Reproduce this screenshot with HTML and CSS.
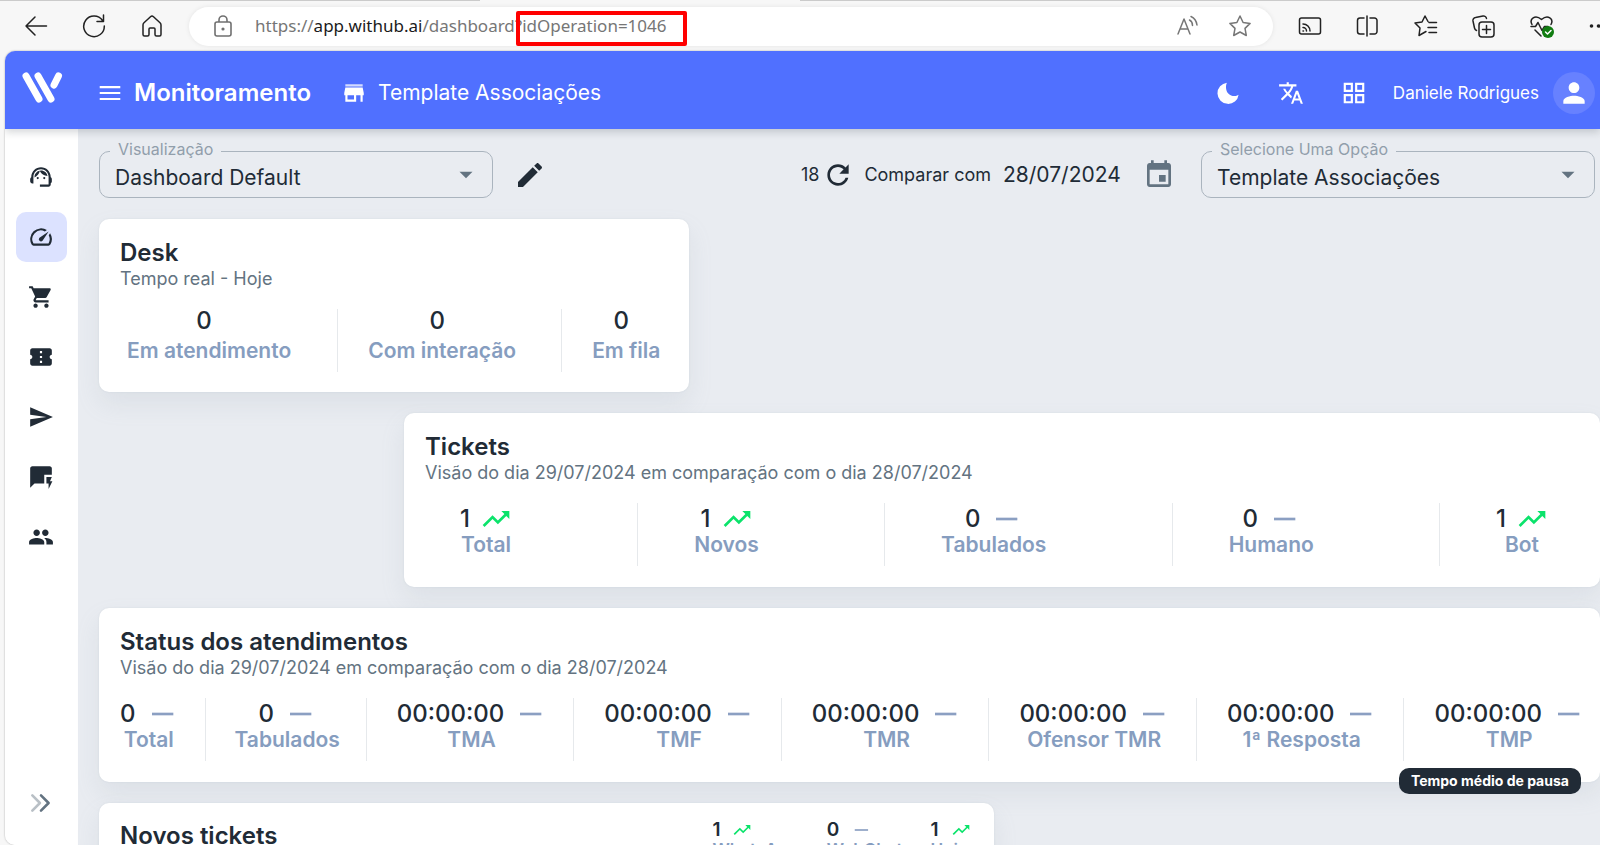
FILE: index.html
```html
<!DOCTYPE html>
<html lang="pt-BR">
<head>
<meta charset="utf-8">
<title>Monitoramento</title>
<link rel="stylesheet" href="styles.css">
</head>
<body>
<svg class="sprite" aria-hidden="true">
  <symbol id="up" viewBox="0 0 24 24"><path d="M16 6l2.29 2.29-4.88 4.88-4-4L2 16.59 3.41 18l6-6 4 4 6.3-6.29L22 12V6z"/></symbol>
  <symbol id="flat" viewBox="0 0 24 24"><path d="M4.500 11h16v2h-16z"/></symbol>
  <symbol id="caret" viewBox="0 0 24 24"><path d="M6 9l6 6 6-6z"/></symbol>
</svg>

<div class="browser">
  <div class="tabline"><span></span><span></span></div>
  <div class="toolbar">
    <button class="tool" aria-label="Voltar"><svg viewBox="0 0 24 24"><path d="M22.500 12H2M11 3l-9 9 9 9"/></svg></button>
    <button class="tool" aria-label="Atualizar"><svg viewBox="0 0 24 24"><path d="M20.500 6.500A10.300 10.300 0 1 0 22.300 12M21.500 1v6.500h-6.500"/></svg></button>
    <button class="tool" aria-label="Início"><svg viewBox="0 0 24 24"><path d="M3 11a3 3 0 0 1 1-2.300l6.500-6a2.300 2.300 0 0 1 3 0l6.500 6a3 3 0 0 1 1 2.300v9.500a1.500 1.500 0 0 1-1.500 1.500h-3a1.500 1.500 0 0 1-1.500-1.500V15a1 1 0 0 0-1-1h-4a1 1 0 0 0-1 1v5.500A1.500 1.500 0 0 1 7.500 22h-3A1.500 1.500 0 0 1 3 20.500z"/></svg></button>
    <div class="address">
      <svg class="lock" viewBox="0 0 24 24"><rect x="4" y="8" width="16" height="14" rx="2"/><path d="M8 8V6a4 4 0 0 1 8 0v2"/><circle cx="12" cy="15" r=".8"/></svg>
      <div class="url" role="textbox" aria-label="Endereço" contenteditable="true" spellcheck="false">https://<b>app.withub.ai</b>/dashboard?<span class="marked">idOperation=1046</span></div>
      <button class="tool soft" aria-label="Ler em voz alta"><svg viewBox="0 0 24 24"><path d="M2 20L8 5l6 15M4.500 15h7.500M13.500 6c2 1 3 3 3 5.500M15 2.500c3.500 1.500 5.500 5 6 8.500"/></svg></button>
      <button class="tool soft" aria-label="Favorito"><svg viewBox="0 0 24 24"><path d="M12 2l3.100 6.500 7 .9-5.100 5 1.300 7.100L12 18l-6.300 3.500L7 14.400l-5.100-5 7-.9z"/></svg></button>
    </div>
    <div class="extras">
      <button class="tool" aria-label="Transmitir"><svg viewBox="0 0 24 24"><rect x="1.500" y="4" width="21" height="16" rx="2"/><path d="M5 17h.5M5 13.500A3.500 3.500 0 0 1 8.500 17M5 10a7 7 0 0 1 7 7"/></svg></button>
      <button class="tool" aria-label="Dividir tela"><svg viewBox="0 0 24 24"><path d="M8 4H4a2.500 2.500 0 0 0-2.500 2.500v11A2.500 2.500 0 0 0 4 20h4M14 4h4.500a2.500 2.500 0 0 1 2.500 2.500v11a2.500 2.500 0 0 1-2.500 2.500H14M11 2v20"/></svg></button>
      <button class="tool" aria-label="Favoritos"><svg viewBox="0 0 24 24"><path d="M12 17.500L5 21.500l1-7.500-5-5 7-1 3-6 3 5.500M15 8.500h7.500M14 13.500h8.500M15 18.500h7.500"/></svg></button>
      <button class="tool" aria-label="Coleções"><svg viewBox="0 0 24 24"><rect x="7" y="8" width="15" height="15" rx="3"/><path d="M14.500 11.500v8M10.500 15.500h8M4.500 16.500A3.500 3.500 0 0 1 2.500 14L1 7a3 3 0 0 1 2.500-3.500L11 2a3 3 0 0 1 3.500 2.500"/></svg></button>
      <button class="tool" aria-label="Desempenho"><svg viewBox="0 0 24 24"><path d="M2 10.500C-1 5 5 0 11.500 5.500 18 0 24 5 21 10.500M1 12.500h4.500l2.500-4 4 8 2.500-4H18M5 16l6 6"/><circle class="ok" cx="18" cy="18" r="6"/><path class="tick" d="M15.500 18l2 2 3.500-3.500"/></svg></button>
      <button class="tool" aria-label="Mais"><svg viewBox="0 0 24 24"><g class="dots"><circle cx="3.500" cy="12" r="1.800"/><circle cx="10.500" cy="12" r="1.800"/><circle cx="17.500" cy="12" r="1.800"/></g></svg></button>
    </div>
  </div>
</div>

<div class="app">
  <header class="header">
    <svg class="logo" viewBox="0 0 44 36"><path d="M6 6l13 23M18 6l13 23M38.500 6l-4.500 9"/></svg>
    <button class="plain" aria-label="Menu"><svg class="ico" viewBox="0 0 24 24"><path d="M2.500 18.500h19v-2h-19zm0-5.500h19v-2h-19zm0-7.500v2h19v-2z"/></svg></button>
    <h1>Monitoramento</h1>
    <svg class="ico store" viewBox="0 0 24 24"><path opacity=".75" d="M4 4h16v2H4z"/><path d="M21 14v-2l-1-5H4l-1 5v2h1v6h10v-6h4v6h2v-6zm-9 4H6v-4h6z"/></svg>
    <span class="place">Template Associações</span>
    <div class="account">
      <button class="plain" aria-label="Modo escuro"><svg class="ico" viewBox="0 0 24 24"><path d="M11 2.500a9.800 9.800 0 1 0 10.800 11c-2.500 2-6.800 1.700-9.300-.8S9.500 5.500 11 2.500z"/></svg></button>
      <button class="plain" aria-label="Idioma"><svg class="ico" viewBox="0 0 24 24"><path d="M12.870 15.070l-2.540-2.510.03-.03c1.740-1.940 2.980-4.170 3.710-6.530H17V4h-7V2H8v2H1v1.990h11.170C11.500 7.920 10.440 9.750 9 11.350 8.070 10.320 7.300 9.190 6.690 8h-2c.73 1.630 1.730 3.170 2.980 4.560l-5.090 5.020L4 19l5-5 3.110 3.110.76-2.040zM18.500 10h-2L12 22h2l1.120-3h4.750L21 22h2l-4.500-12zm-2.620 7l1.620-4.330L19.120 17h-3.240z"/></svg></button>
      <button class="plain" aria-label="Aplicativos"><svg class="ico" viewBox="0 0 24 24"><path d="M2.500 2.500v8.500H11V2.500zM9 9H4.500V4.500H9zM2.500 13v8.500H11V13zM9 19.500H4.500V15H9zM13 2.500v8.500h8.500V2.500zM19.500 9H15V4.500h4.500zM13 13v8.500h8.500V13zm6.500 6.500H15V15h4.500z"/></svg></button>
      <span class="user">Daniele Rodrigues</span>
      <button class="avatar" aria-label="Perfil"><svg viewBox="0 0 24 24"><path d="M12 12c2.210 0 4-1.790 4-4s-1.790-4-4-4-4 1.790-4 4 1.790 4 4 4zm0 2c-2.670 0-8 1.340-8 4v2h16v-2c0-2.660-5.330-4-8-4z"/></svg></button>
    </div>
  </header>

  <div class="body">
    <nav class="side" aria-label="Principal">
      <a href="#desk" aria-label="Desk"><svg viewBox="0 0 24 24"><path d="M21 12.220C21 6.730 16.740 3 12 3c-4.690 0-9 3.650-9 9.280-.6.340-1 .980-1 1.720v2c0 1.100.9 2 2 2h1v-6.100c0-3.870 3.130-7 7-7s7 3.130 7 7V19h-8v2h8c1.100 0 2-.9 2-2v-1.220c.590-.310 1-.920 1-1.640v-2.300c0-.7-.410-1.310-1-1.620z"/><circle cx="9" cy="13" r="1"/><circle cx="15" cy="13" r="1"/><path d="M18 11.030C17.520 8.180 15.040 6 12.050 6c-3.030 0-6.290 2.510-6.030 6.450 2.470-1.010 4.330-3.210 4.860-5.890 1.310 2.630 4 4.440 7.120 4.470z"/></svg></a>
      <a href="#dashboard" class="active" aria-label="Dashboard" aria-current="page"><svg viewBox="0 0 24 24"><path d="M20.380 8.570l-1.230 1.850a8 8 0 0 1-.220 7.580H5.070A8 8 0 0 1 15.580 6.850l1.850-1.230A10 10 0 0 0 3.350 19a2 2 0 0 0 1.720 1h13.850a2 2 0 0 0 1.740-1 10 10 0 0 0-.270-10.440z"/><path d="M10.590 15.410a2 2 0 0 0 2.830 0l5.660-8.490-8.490 5.660a2 2 0 0 0 0 2.830z"/></svg></a>
      <a href="#vendas" aria-label="Vendas"><svg viewBox="0 0 24 24"><path d="M7 18c-1.100 0-1.990.9-1.990 2S5.900 22 7 22s2-.9 2-2-.9-2-2-2zM1 2v2h2l3.600 7.590-1.350 2.450c-.160.280-.250.610-.250.960 0 1.100.9 2 2 2h12v-2H7.420c-.140 0-.250-.110-.250-.250l.03-.120.9-1.630h7.450c.750 0 1.410-.410 1.750-1.030l3.580-6.490c.08-.140.120-.310.120-.480 0-.550-.450-1-1-1H5.210l-.940-2H1zm16 16c-1.100 0-1.990.9-1.990 2s.890 2 1.990 2 2-.9 2-2-.9-2-2-2z"/></svg></a>
      <a href="#tickets" aria-label="Tickets"><svg viewBox="0 0 24 24"><path d="M22 10V6c0-1.110-.9-2-2-2H4c-1.100 0-1.990.890-1.990 2v4c1.100 0 1.990.9 1.990 2s-.890 2-2 2v4c0 1.100.9 2 2 2h16c1.100 0 2-.9 2-2v-4c-1.100 0-2-.9-2-2s.9-2 2-2zm-9 7.500h-2v-2h2v2zm0-4.500h-2v-2h2v2zm0-4.500h-2v-2h2v2z"/></svg></a>
      <a href="#envios" aria-label="Envios"><svg viewBox="0 0 24 24"><path d="M2.010 21L23 12 2.010 3 2 10l15 2-15 2z"/></svg></a>
      <a href="#respostas" aria-label="Respostas rápidas"><svg viewBox="0 0 24 24"><path d="M22 4c0-1.100-.9-2-2-2H4c-1.100 0-1.990.9-1.990 2L2 22l4-4h9v-8h7V4z"/><path d="M22.500 16h-2.200l1.700-4h-5v6h2v5z"/></svg></a>
      <a href="#contatos" aria-label="Contatos"><svg viewBox="0 0 24 24"><path d="M16 11c1.660 0 2.990-1.340 2.990-3S17.660 5 16 5c-1.660 0-3 1.340-3 3s1.340 3 3 3zm-8 0c1.660 0 2.990-1.340 2.990-3S9.660 5 8 5C6.340 5 5 6.340 5 8s1.340 3 3 3zm0 2c-2.330 0-7 1.170-7 3.500V19h14v-2.500c0-2.330-4.670-3.500-7-3.500zm8 0c-.290 0-.620.02-.970.05 1.160.840 1.970 1.970 1.970 3.450V19h6v-2.500c0-2.330-4.670-3.500-7-3.500z"/></svg></a>
      <button class="expand" aria-label="Expandir menu"><svg viewBox="0 0 24 24"><path class="faint" d="M4 5l7 7-7 7"/><path d="M12 5l7 7-7 7"/></svg></button>
    </nav>

    <main class="content">
      <div class="filters">
        <div class="field">
          <label for="view">Visualização</label>
          <select id="view"><option>Dashboard Default</option></select>
          <svg><use href="#caret"/></svg>
        </div>
        <button class="plain edit" aria-label="Editar"><svg viewBox="0 0 24 24"><path d="M3 17.250V21h3.750L17.810 9.940l-3.750-3.750L3 17.250zM20.710 7.040c.390-.390.390-1.020 0-1.410l-2.340-2.340c-.390-.390-1.020-.390-1.410 0l-1.830 1.830 3.750 3.750 1.830-1.830z"/></svg></button>
        <div class="compare">
          <span class="count">18</span>
          <button class="plain" aria-label="Recarregar"><svg class="reload" viewBox="0 0 24 24"><path d="M17.650 6.350C16.200 4.900 14.210 4 12 4c-4.420 0-7.990 3.580-7.990 8s3.570 8 7.990 8c3.730 0 6.840-2.550 7.730-6h-2.080c-.820 2.330-3.040 4-5.650 4-3.310 0-6-2.690-6-6s2.690-6 6-6c1.660 0 3.140.690 4.220 1.780L13 11h7V4l-2.350 2.350z"/></svg></button>
          <label for="date">Comparar com</label>
          <input id="date" type="text" value="28/07/2024">
          <button class="plain" aria-label="Escolher data"><svg class="cal" viewBox="0 0 24 24"><path d="M17 12h-5v5h5v-5zM16 1v2H8V1H6v2H5c-1.110 0-1.990.9-1.990 2L3 19c0 1.100.890 2 2 2h14c1.100 0 2-.9 2-2V5c0-1.100-.9-2-2-2h-1V1h-2zm3 18H5V8h14v11z"/></svg></button>
        </div>
        <div class="field">
          <label for="option">Selecione Uma Opção</label>
          <select id="option"><option>Template Associações</option></select>
          <svg><use href="#caret"/></svg>
        </div>
      </div>

      <section class="card desk">
        <h2>Desk</h2>
        <p class="sub">Tempo real - Hoje</p>
        <dl class="stats">
          <div><dd>0</dd><dt>Em atendimento</dt></div>
          <div><dd>0</dd><dt>Com interação</dt></div>
          <div><dd>0</dd><dt>Em fila</dt></div>
        </dl>
      </section>

      <section class="card tickets">
        <h2>Tickets</h2>
        <p class="sub">Visão do dia 29/07/2024 em comparação com o dia 28/07/2024</p>
        <dl class="stats">
          <div><dd>1<svg class="good"><use href="#up"/></svg></dd><dt>Total</dt></div>
          <div><dd>1<svg class="good"><use href="#up"/></svg></dd><dt>Novos</dt></div>
          <div><dd>0<svg><use href="#flat"/></svg></dd><dt>Tabulados</dt></div>
          <div><dd>0<svg><use href="#flat"/></svg></dd><dt>Humano</dt></div>
          <div><dd>1<svg class="good"><use href="#up"/></svg></dd><dt>Bot</dt></div>
        </dl>
      </section>

      <section class="card status">
        <h2>Status dos atendimentos</h2>
        <p class="sub">Visão do dia 29/07/2024 em comparação com o dia 28/07/2024</p>
        <dl class="stats">
          <div><dd>0<svg><use href="#flat"/></svg></dd><dt>Total</dt></div>
          <div><dd>0<svg><use href="#flat"/></svg></dd><dt>Tabulados</dt></div>
          <div><dd>00:00:00<svg><use href="#flat"/></svg></dd><dt>TMA</dt></div>
          <div><dd>00:00:00<svg><use href="#flat"/></svg></dd><dt>TMF</dt></div>
          <div><dd>00:00:00<svg><use href="#flat"/></svg></dd><dt>TMR</dt></div>
          <div><dd>00:00:00<svg><use href="#flat"/></svg></dd><dt>Ofensor TMR</dt></div>
          <div><dd>00:00:00<svg><use href="#flat"/></svg></dd><dt>1ª Resposta</dt></div>
          <div class="hinted"><dd>00:00:00<svg><use href="#flat"/></svg></dd><dt>TMP</dt><span class="tooltip" role="tooltip">Tempo médio de pausa</span></div>
        </dl>
      </section>

      <section class="card fresh">
        <h2>Novos tickets</h2>
        <dl class="mini">
          <div><dd>1<svg class="good"><use href="#up"/></svg></dd><dt>WhatsApp</dt></div>
          <div><dd>0<svg><use href="#flat"/></svg></dd><dt>WebChat</dt></div>
          <div><dd>1<svg class="good"><use href="#up"/></svg></dd><dt>Hoje</dt></div>
        </dl>
      </section>
    </main>
  </div>
</div>
</body>
</html>
```
FILE: styles.css
```css
* { box-sizing: border-box; }

body {
  margin: 0;
  height: 100vh;
  display: flex;
  flex-direction: column;
  overflow: hidden;
  background: #f7f7f7;
  color: #212b36;
  font-family: Inter, "Liberation Sans", sans-serif;
}

h1, h2, p, dl, dd, dt { margin: 0; }
svg { display: block; flex: none; }
button { padding: 0; border: 0; background: none; color: inherit; font: inherit; }
.sprite { position: absolute; width: 0; height: 0; }

/* Browser chrome */
.browser { flex: none; }
.tabline { display: flex; justify-content: space-between; height: 1px; }
.tabline span { width: 30%; background: #cbcbcb; }
.tabline span:last-child { width: 50%; }
.toolbar { display: flex; align-items: center; height: 50px; padding-left: 24px; }
.tool { width: 24px; height: 24px; margin-right: 34px; }
.tool svg {
  width: 24px;
  height: 24px;
  fill: none;
  stroke: #222;
  stroke-width: 1.5;
  stroke-linecap: round;
  stroke-linejoin: round;
}
.tool .ok { fill: #107c10; stroke: none; }
.tool .tick { stroke: #fff; }
.tool .dots { fill: #222; stroke: none; }
.address {
  flex: 1;
  display: flex;
  align-items: center;
  height: 39px;
  margin-left: -9px;
  margin-right: 25px;
  padding: 0 21px 0 22px;
  border-radius: 20px;
  background: #fff;
  box-shadow: 0 0 5px rgba(0, 0, 0, .08);
}
.lock {
  width: 24px;
  height: 24px;
  margin-right: 20px;
  fill: none;
  stroke: #707070;
  stroke-width: 1.6;
}
.url {
  flex: 1;
  color: #767676;
  font: 17px/26px "Noto Sans", "Open Sans", sans-serif;
  white-space: nowrap;
}
.url b { color: #1b1b1b; font-weight: 400; }
.marked { position: relative; }
.marked::after {
  content: "";
  position: absolute;
  inset: -3px -20px -9px -6px;
  border: 4px solid #f00;
  border-radius: 2px;
}
.soft { margin-right: 28px; }
.soft:last-child { margin-right: 0; }
.soft svg { stroke: #767676; }
.extras { display: flex; margin-right: -12px; }
.extras .tool:last-child { margin-right: 0; }

/* Application frame */
.app {
  flex: 1;
  min-height: 0;
  display: flex;
  flex-direction: column;
  margin-left: 5px;
  border-radius: 10px 0 0 10px;
  overflow: hidden;
  box-shadow: 0 0 2px rgba(0, 0, 0, .35);
}
.header {
  position: relative;
  z-index: 1;
  flex: none;
  display: flex;
  align-items: center;
  height: 78px;
  padding: 5px 5px 0 15px;
  background: #5070ff;
  color: #fff;
  box-shadow: 0 3px 8px rgba(33, 43, 54, .2);
}
.logo {
  width: 44px;
  height: 36px;
  margin: 0 33px 10px 0;
  fill: none;
  stroke: #fff;
  stroke-width: 7;
  stroke-linecap: round;
}
.ico { width: 26px; height: 26px; fill: currentColor; }
.header h1 { margin-left: 11px; font-size: 24px; line-height: 32px; font-weight: 600; }
.store { margin: 0 11px 0 30px; }
.place { font-size: 21px; line-height: 32px; }
.account { display: flex; align-items: center; gap: 37px; margin-left: auto; }
.user { font-size: 17px; line-height: 24px; margin: 0 -23px 0 -11px; }
.avatar {
  display: grid;
  place-items: center;
  width: 42px;
  height: 42px;
  border-radius: 50%;
  background: #6781ff;
}
.avatar svg { width: 32px; height: 32px; fill: #fff; }

.body { flex: 1; min-height: 0; display: flex; }

.side {
  flex: none;
  display: flex;
  flex-direction: column;
  align-items: center;
  gap: 10px;
  width: 73px;
  padding: 23px 1px 24px 0;
  background: #fff;
}
.side a {
  display: grid;
  place-items: center;
  width: 51px;
  height: 50px;
  border-radius: 10px;
  color: #212b36;
}
.side a.active { background: #dce2ff; }
.side a svg { width: 26px; height: 26px; fill: currentColor; }
.expand { margin-top: auto; padding: 5px; }
.expand svg {
  width: 26px;
  height: 26px;
  fill: none;
  stroke: #637381;
  stroke-width: 2.4;
  stroke-linecap: round;
  stroke-linejoin: round;
}
.expand .faint { opacity: .45; }

.content {
  flex: 1;
  min-width: 0;
  display: flex;
  flex-direction: column;
  gap: 21px;
  padding: 22px 0 0 21px;
  background: #e9ecf1;
}

/* Filter bar */
.filters { display: flex; align-items: center; padding-right: 5px; }
.field { position: relative; width: 394px; }
.field label {
  position: absolute;
  top: -12px;
  left: 11px;
  padding: 0 8px;
  background: #e9ecf1;
  color: #919eab;
  font-size: 16px;
  line-height: 20px;
}
.field select {
  appearance: none;
  display: block;
  width: 100%;
  height: 47px;
  padding: 6px 40px 0 15px;
  border: 1px solid #aab4be;
  border-radius: 10px;
  background: transparent;
  color: #212b36;
  font: 21px/32px Inter, sans-serif;
}
.field svg {
  position: absolute;
  top: 11px;
  right: 14px;
  width: 26px;
  height: 26px;
  fill: #637381;
  pointer-events: none;
}
.edit { margin-left: 21px; }
.edit svg { width: 32px; height: 32px; fill: #212b36; }
.compare { display: flex; align-items: center; margin-left: auto; margin-right: 26px; }
.compare .count, .compare label { font-size: 18px; line-height: 28px; }
.reload { width: 32px; height: 32px; margin: 0 10px 0 3px; fill: #212b36; }
.compare input {
  width: 118px;
  margin: 0 22px 0 12px;
  padding: 0;
  border: 0;
  background: none;
  color: #212b36;
  font: 21px/32px Inter, sans-serif;
}
.cal { width: 32px; height: 32px; fill: #637381; }

/* Cards */
.card {
  flex: none;
  padding: 21px;
  border-radius: 10px;
  background: #fff;
  box-shadow: 0 0 2px rgba(145, 158, 171, .2), 0 12px 24px rgba(145, 158, 171, .14);
}
.card h2 { font-size: 24px; line-height: 26px; font-weight: 600; }
.sub { margin-bottom: 17px; color: #637381; font-size: 18px; line-height: 26px; }
.stats { display: flex; height: 63px; }
.stats > div {
  display: flex;
  flex-direction: column;
  align-items: center;
  padding: 0 27px 0 30px;
  border-left: 1px solid #e6e9ec;
}
.stats > div:first-child { padding-left: 0; border-left: 0; }
.stats dd, .mini dd {
  display: flex;
  align-items: center;
  gap: 10px;
  font-size: 24px;
  line-height: 32px;
  font-weight: 500;
}
.stats dt, .mini dt {
  color: #869dbf;
  font-size: 21px;
  line-height: 20px;
  font-weight: 600;
  white-space: nowrap;
}
.stats svg { width: 32px; height: 32px; }
.stats svg, .mini svg { fill: #8b9fc2; }
.stats svg.good, .mini svg.good { fill: #0be36b; }

.desk { align-self: flex-start; padding-bottom: 20px; }
.desk .stats > div { padding-right: 45px; }
.desk .stats > div:first-child { padding-left: 7px; padding-right: 46px; }
.desk .stats > div:last-child { padding-right: 8px; }
.desk dd { margin-right: 10px; margin-bottom: 8px; line-height: 24px; }

.tickets { margin-left: 305px; }
.tickets .stats > div {
  flex: 1 0 auto;
  display: grid;
  justify-content: start;
  justify-items: center;
  align-content: start;
  padding-left: 56px;
}
.tickets .stats > div:first-child { padding-left: 35px; }
.tickets .stats > div:last-child { flex: none; padding-right: 31px; }

.status .stats > div:nth-child(2) { padding: 0 26px 0 29px; }

.hinted { position: relative; }
.tooltip {
  position: absolute;
  top: 70px;
  right: 30px;
  padding: 0 12px;
  border-radius: 10px;
  background: #212b36;
  color: #fff;
  font-size: 14px;
  line-height: 26px;
  font-weight: 700;
  white-space: nowrap;
}

.fresh { display: flex; justify-content: space-between; width: calc(60% - 6px); padding-top: 17px; }
.fresh h2 { margin-top: 3px; }
.mini { display: flex; gap: 28px; }
.mini dd { font-size: 19px; line-height: 20px; font-weight: 600; }
.mini dt { font-size: 17px; line-height: 20px; }
.mini svg { width: 24px; height: 20px; }
```
